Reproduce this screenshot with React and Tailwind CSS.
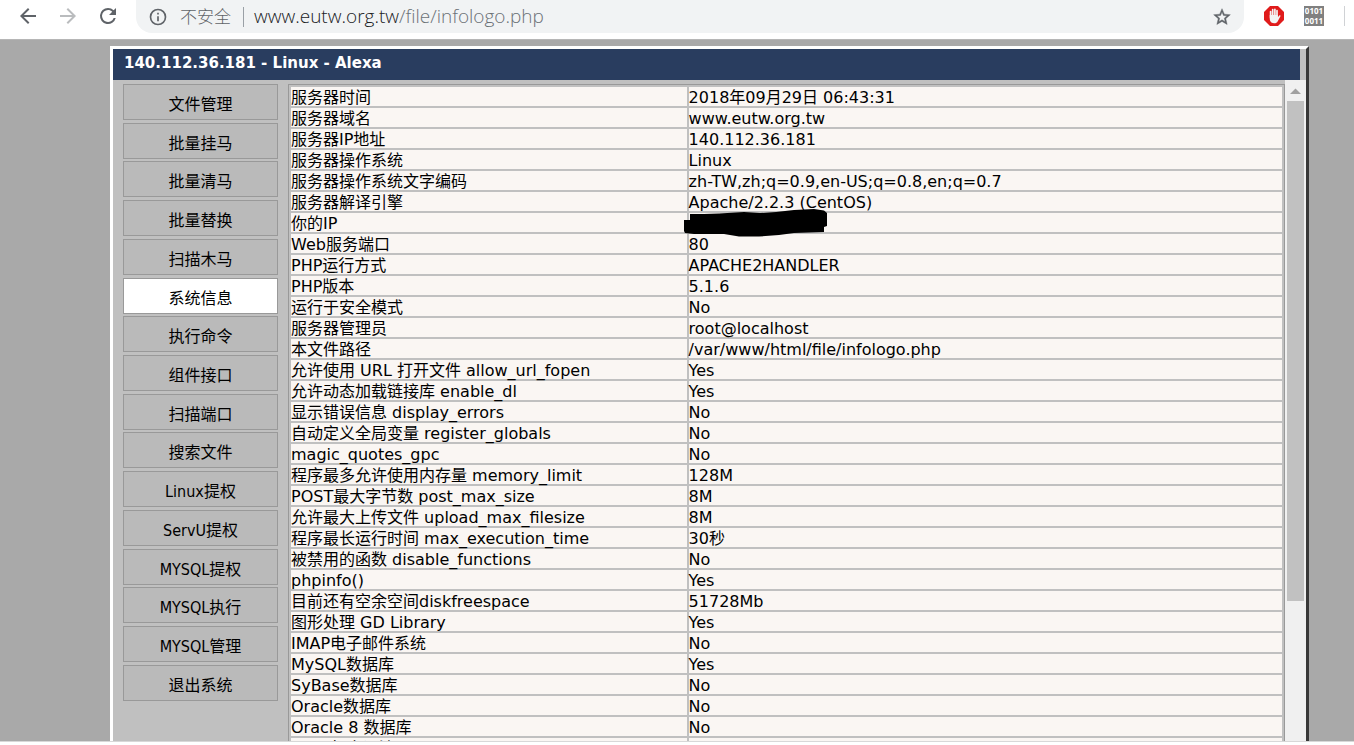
import React, { useState } from "react";

const MENU = [
  "文件管理",
  "批量挂马",
  "批量清马",
  "批量替换",
  "扫描木马",
  "系统信息",
  "执行命令",
  "组件接口",
  "扫描端口",
  "搜索文件",
  "Linux提权",
  "ServU提权",
  "MYSQL提权",
  "MYSQL执行",
  "MYSQL管理",
  "退出系统",
];

const ROWS = [
  ["服务器时间", "2018年09月29日 06:43:31"],
  ["服务器域名", "www.eutw.org.tw"],
  ["服务器IP地址", "140.112.36.181"],
  ["服务器操作系统", "Linux"],
  ["服务器操作系统文字编码", "zh-TW,zh;q=0.9,en-US;q=0.8,en;q=0.7"],
  ["服务器解译引擎", "Apache/2.2.3 (CentOS)"],
  ["你的IP", null],
  ["Web服务端口", "80"],
  ["PHP运行方式", "APACHE2HANDLER"],
  ["PHP版本", "5.1.6"],
  ["运行于安全模式", "No"],
  ["服务器管理员", "root@localhost"],
  ["本文件路径", "/var/www/html/file/infologo.php"],
  ["允许使用 URL 打开文件 allow_url_fopen", "Yes"],
  ["允许动态加载链接库 enable_dl", "Yes"],
  ["显示错误信息 display_errors", "No"],
  ["自动定义全局变量 register_globals", "No"],
  ["magic_quotes_gpc", "No"],
  ["程序最多允许使用内存量 memory_limit", "128M"],
  ["POST最大字节数 post_max_size", "8M"],
  ["允许最大上传文件 upload_max_filesize", "8M"],
  ["程序最长运行时间 max_execution_time", "30秒"],
  ["被禁用的函数 disable_functions", "No"],
  ["phpinfo()", "Yes"],
  ["目前还有空余空间diskfreespace", "51728Mb"],
  ["图形处理 GD Library", "Yes"],
  ["IMAP电子邮件系统", "No"],
  ["MySQL数据库", "Yes"],
  ["SyBase数据库", "No"],
  ["Oracle数据库", "No"],
  ["Oracle 8 数据库", "No"],
  ["PREL相容语法 PCRE", ""],
];

function Toolbar() {
  return (
    <header className="flex h-[39px] shrink-0 items-start bg-white pl-4 font-['Open_Sans','Noto_Sans_CJK_SC',sans-serif]">
      <nav className="flex h-8 items-center gap-4 text-[#5f6368]">
        <button type="button" aria-label="Back">
          <svg className="size-6" viewBox="0 0 24 24" fill="currentColor">
            <path d="M20 11H7.83l5.59-5.59L12 4l-8 8 8 8 1.41-1.41L7.83 13H20v-2z" />
          </svg>
        </button>
        <button type="button" aria-label="Forward" className="text-[#babcbe]">
          <svg className="size-6" viewBox="0 0 24 24" fill="currentColor">
            <path d="M12 4l-1.41 1.41L16.17 11H4v2h12.17l-5.58 5.59L12 20l8-8z" />
          </svg>
        </button>
        <button type="button" aria-label="Reload">
          <svg className="size-6" viewBox="0 0 24 24" fill="currentColor">
            <path d="M17.65 6.35A7.96 7.96 0 0 0 12 4a8 8 0 1 0 7.73 10h-2.08A6 6 0 1 1 12 6c1.66 0 3.14.69 4.22 1.78L13 11h7V4l-2.35 2.35z" />
          </svg>
        </button>
      </nav>
      <div className="ml-4 flex h-[33px] flex-1 items-center rounded-b-2xl bg-[#f1f3f4] px-3">
        <svg className="size-5 text-[#5f6368]" viewBox="0 0 24 24" fill="currentColor">
          <path d="M11 17h2v-6h-2v6zm1-15a10 10 0 1 0 0 20 10 10 0 0 0 0-20zm0 18a8 8 0 1 1 0-16 8 8 0 0 1 0 16zM11 9h2V7h-2v2z" />
        </svg>
        <span className="ml-3 text-[17px] leading-8 font-light text-[#5f6368]">不安全</span>
        <span className="mr-[10px] ml-3 h-5 w-px bg-[#9aa0a6]" />
        <a href="#" className="flex-1 pb-[2px] text-[19px] leading-[30px] font-light text-[#6b7176]">
          <span className="text-[#202124]">www.eutw.org.tw</span>/file/infologo.php
        </a>
        <button type="button" aria-label="Bookmark" className="text-[#5f6368]">
          <svg className="size-5" viewBox="0 0 24 24" fill="currentColor" stroke="currentColor" strokeWidth=".5">
            <path d="M22 9.24l-7.19-.62L12 2 9.19 8.63 2 9.24l5.46 4.73L5.82 21 12 17.27 18.18 21l-1.63-7.03L22 9.24zM12 15.4l-3.76 2.27 1-4.28-3.32-2.88 4.38-.38L12 6.1l1.71 4.04 4.38.38-3.32 2.88 1 4.28L12 15.4z" />
          </svg>
        </button>
      </div>
      <div className="flex h-8 items-center pl-5">
        <button type="button" aria-label="Ad blocker">
          <svg className="size-5" viewBox="0 0 20 20">
            <path d="M6 0h8l6 6v8l-6 6H6l-6-6V6z" fill="#e01b1b" />
            <g stroke="#f4f4f4" strokeWidth="1.7" strokeLinecap="round">
              <path d="M6.6 5.500v6M8.700 3.700v7M10.900 3.300v7M13 4.700v7" />
            </g>
            <path
              d="M5.750 9h8.100v2.200l1.400-1.700c.7-.7 1.600-.1 1.200.7l-2.700 5c-.8 1.400-1.800 2-3.500 2-3 0-4.500-1.700-4.500-4.700z"
              fill="#f4f4f4"
            />
          </svg>
        </button>
        <button
          type="button"
          className="ml-5 flex h-5 w-5 flex-col items-center bg-[#808080] font-['Noto_Sans',sans-serif] text-[8px] leading-[10px] font-bold text-white"
        >
          <span>0101</span>
          <span>0011</span>
        </button>
        <span className="mr-[9px] ml-5 h-5 w-px bg-[#d0d2d5]" />
      </div>
    </header>
  );
}

function Redacted() {
  return (
    <svg className="absolute -top-1 -left-[5px] h-7 w-36" viewBox="0 0 144 28" aria-hidden="true">
      <path d="M6 5 L20 5 L35 4.500 L60 3 L76 4 L92 3 L110 1 L130 0 L140 1.500 L143 4 L143 17 L140 18 L140 23 L110 24 L95 26 L75 27.500 L55 27.500 L40 25 L10 25 L1 24 L0 22 L0 11 L6 11 Z" />
    </svg>
  );
}

function Sidebar({ active, onSelect }) {
  return (
    <nav className="flex h-[617px] w-[155px] shrink-0 flex-col justify-between font-['DejaVu_Sans_Condensed','Noto_Sans_CJK_SC',sans-serif]">
      {MENU.map((item) => (
        <button
          key={item}
          type="button"
          onClick={() => onSelect(item)}
          className={`h-9 border border-[#999] pt-[6px] text-base leading-5 text-black ${
            item === active ? "bg-white" : "bg-[#bababa]"
          }`}
        >
          {item}
        </button>
      ))}
    </nav>
  );
}

function InfoTable() {
  return (
    <table className="w-full table-fixed border-separate border-spacing-[2px] border border-[#999] text-base leading-[21px] text-black">
      <colgroup>
        <col className="w-[40%]" />
        <col />
      </colgroup>
      <tbody>
        {ROWS.map(([label, value]) => (
          <tr key={label} className="h-[19px]">
            <td className="bg-[#faf6f3] p-0">
              <div className="h-[19px] whitespace-nowrap">{label}</div>
            </td>
            <td className="bg-[#faf6f3] p-0">
              <div className="relative h-[19px] whitespace-nowrap">{value ?? <Redacted />}</div>
            </td>
          </tr>
        ))}
      </tbody>
    </table>
  );
}

function Scrollbar() {
  return (
    <div className="flex w-[21px] shrink-0 flex-col items-center bg-[#f0f0f0]" aria-hidden="true">
      <svg className="h-[21px] w-full" viewBox="0 0 21 21">
        <path d="M5 14l5.500-5.500 5.500 5.500z" fill="#a0a0a0" />
      </svg>
      <div className="h-[500px] w-[17px] bg-[#c1c1c1]" />
    </div>
  );
}

export default function App() {
  const [active, setActive] = useState("系统信息");

  return (
    <div className="flex h-screen flex-col overflow-hidden bg-white font-['DejaVu_Sans','Noto_Sans_CJK_SC',sans-serif]">
      <Toolbar />
      <main className="flex min-h-0 flex-1 flex-col overflow-hidden border-t border-b border-t-[#b6b6b6] border-b-[#d8d8d8] bg-[#a9a9a9] pt-[6px] pr-[45px] pl-[110px]">
        <div className="flex min-h-0 flex-1 flex-col border-3 border-b-0 border-t-white border-r-[#383838] border-l-white bg-[#c0c0c0]">
          <h1 className="mr-[6px] h-[31px] shrink-0 bg-[#293d5f] pl-[11px] font-['DejaVu_Sans',sans-serif] text-[15px] leading-7 font-bold text-white">
            140.112.36.181 - Linux - Alexa
          </h1>
          <div className="flex min-h-0 flex-1">
            <div className="flex min-w-0 flex-1 items-start gap-[10px] overflow-hidden pt-1 pl-[10px]">
              <Sidebar active={active} onSelect={setActive} />
              <div className="min-w-0 flex-1">
                <InfoTable />
              </div>
            </div>
            <Scrollbar />
          </div>
        </div>
      </main>
      <div className="h-[3px] shrink-0 bg-white" />
    </div>
  );
}
